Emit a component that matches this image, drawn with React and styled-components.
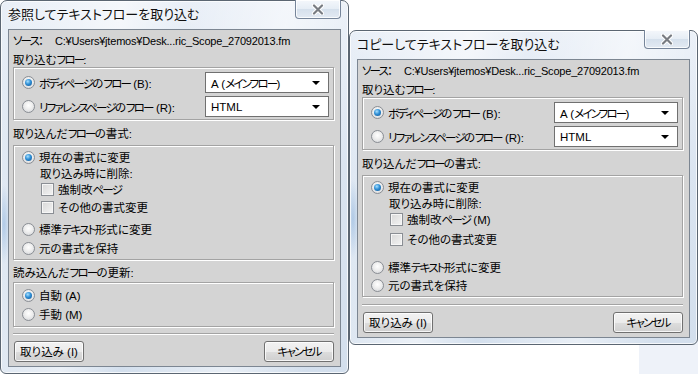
import styled, { createGlobalStyle } from "styled-components";

const GlobalStyle = createGlobalStyle`
  html, body {
    margin: 0;
    padding: 0;
    background: #ffffff;
  }
  body {
    font-family: "Liberation Sans", "Noto Sans CJK JP", sans-serif;
    font-size: 11.5px;
    color: #000;
    font-feature-settings: "palt";
  }
`;

const Desktop = styled.div`
  position: relative;
  width: 698px;
  height: 374px;
  overflow: hidden;
  background: #ffffff;
`;

const DesktopPatch = styled.div`
  position: absolute;
  left: 639px;
  top: 330px;
  width: 59px;
  height: 44px;
  background: #eef2f9;
`;

const Window = styled.div`
  position: absolute;
  left: ${(p) => p.x}px;
  top: ${(p) => p.y}px;
  width: 349px;
  box-sizing: border-box;
  border: 1px solid #5b6672;
  border-radius: 7px 7px 6px 6px;
  padding: 0 7px 6px 7px;
  display: flex;
  flex-direction: column;
  background:
    radial-gradient(ellipse 6px 40px at 3px 60%, rgba(120, 165, 215, 0.45), rgba(120, 165, 215, 0) 100%),
    linear-gradient(100deg, rgba(255,255,255,0) 0%, rgba(255,255,255,0.55) 30%, rgba(255,255,255,0) 45%, rgba(255,255,255,0.5) 70%, rgba(255,255,255,0) 90%),
    linear-gradient(180deg, #e9eff7 0%, #dbe5f1 45%, #d3dfed 100%);
  box-shadow: inset 0 0 0 1px rgba(255, 255, 255, 0.75);
`;

const TitleBar = styled.div`
  height: 28px;
  display: flex;
  align-items: flex-start;
`;

const Title = styled.div`
  line-height: 28px;
  font-size: 13px;
  color: #101010;
  text-shadow: 0 0 6px rgba(255, 255, 255, 0.9);
`;

const CloseButton = styled.div`
  margin-left: auto;
  margin-top: -1px;
  width: 46px;
  height: 19px;
  box-sizing: border-box;
  border: 1px solid #76859a;
  border-top: none;
  border-radius: 0 0 4px 4px;
  background: linear-gradient(180deg, #f4f7fb 0%, #e6edf5 50%, #d5e0ec 51%, #e3eaf3 100%);
  box-shadow: inset 0 0 0 1px rgba(255, 255, 255, 0.8);
  display: flex;
  align-items: center;
  justify-content: center;
`;

const Client = styled.div`
  background: #d4d4d4;
  border: 1px solid #7c8692;
  padding: 0 6px 4px 4px;
  display: flex;
  flex-direction: column;
`;

const TextLine = styled.div`
  line-height: 16px;
  height: 16px;
  margin-top: ${(p) => p.mt || 0}px;
  white-space: nowrap;
`;

const SourceLine = styled(TextLine)`
  display: flex;
  gap: 11px;
`;

const Path = styled.span`
  font-size: 11px;
  letter-spacing: -0.2px;
`;

const Kana = styled.span`
  letter-spacing: -1.8px;
`;

const Group = styled.div`
  margin-top: ${(p) => p.mt || 0}px;
  border: 1px solid #a3a3a3;
  box-shadow: inset 1px 1px 0 #ffffff, 1px 1px 0 #ffffff;
  padding: ${(p) => p.pt}px 4px ${(p) => p.pb}px 8px;
  display: flex;
  flex-direction: column;
`;

const Row = styled.div`
  display: flex;
  align-items: center;
  height: ${(p) => p.h || 16}px;
  margin-top: ${(p) => p.mt || 0}px;
  padding-left: ${(p) => p.indent || 0}px;
  gap: 4px;
  white-space: nowrap;
`;

const Radio = styled.span`
  width: 13px;
  height: 13px;
  box-sizing: border-box;
  border-radius: 50%;
  border: 1px solid #8a8e94;
  background: radial-gradient(circle at 50% 40%, #ffffff 0%, #eeeeee 45%, #cfd2d6 100%);
  display: flex;
  align-items: center;
  justify-content: center;
  flex: none;

  &::after {
    content: "";
    width: 7px;
    height: 7px;
    border-radius: 50%;
    display: ${(p) => (p.checked ? "block" : "none")};
    background: radial-gradient(circle at 40% 35%, #a9e1ff 0%, #2f8fd6 45%, #0f4f8c 100%);
  }
`;

const Check = styled.span`
  width: 13px;
  height: 13px;
  box-sizing: border-box;
  border: 1px solid #8a8e94;
  background: linear-gradient(135deg, #d8d8d8 0%, #f4f4f4 100%);
  box-shadow: inset 0 0 0 1px #f6f6f6;
  flex: none;
`;

const Combo = styled.div`
  margin-left: auto;
  flex: none;
  width: 124px;
  height: 21px;
  box-sizing: border-box;
  border: 1px solid #707070;
  background: #ffffff;
  display: flex;
  align-items: center;
  padding: 0 8px 0 5px;
`;

const ComboText = styled.span`
  flex: 1;
`;

const Arrow = styled.span`
  width: 0;
  height: 0;
  border-left: 4px solid transparent;
  border-right: 4px solid transparent;
  border-top: 4px solid #000;
`;

const Separator = styled.div`
  margin-top: ${(p) => p.mt}px;
  height: 1px;
  background: #a3a3a3;
  border-bottom: 1px solid #ffffff;
`;

const ButtonBar = styled.div`
  margin-top: ${(p) => p.mt}px;
  display: flex;
  justify-content: space-between;
  padding-left: 1px;
`;

const Button = styled.div`
  width: 70px;
  height: 21px;
  box-sizing: border-box;
  border: 1px solid #707070;
  border-radius: 3px;
  background: linear-gradient(180deg, #f2f2f2 0%, #ebebeb 50%, #dddddd 51%, #cfcfcf 100%);
  box-shadow: inset 0 0 0 1px rgba(255, 255, 255, 0.8);
  display: flex;
  align-items: center;
  justify-content: center;
  line-height: 16px;
`;

// Meiryo UI draws katakana narrower than Noto; tighten just those runs
const T = ({ children }) =>
  String(children)
    .split(/([\u30A0-\u30FF]+)/)
    .map((part, i) =>
      /[\u30A0-\u30FF]/.test(part) ? <Kana key={i}>{part}</Kana> : part
    );

const CloseGlyph = () => (
  <svg width="12" height="11" viewBox="0 0 12 11">
    <path d="M2 1.5 L10 9.5 M10 1.5 L2 9.5" stroke="#ffffff" strokeWidth="4.2" strokeLinecap="round" />
    <path d="M2 1.5 L10 9.5 M10 1.5 L2 9.5" stroke="#787c82" strokeWidth="2.2" strokeLinecap="round" />
  </svg>
);

const Dialog = ({ x, y, title, withUpdate, spacing, mnemonic }) => (
  <Window x={x} y={y}>
    <TitleBar>
      <Title>{title}</Title>
      <CloseButton>
        <CloseGlyph />
      </CloseButton>
    </TitleBar>
    <Client>
      <SourceLine mt={3}>
        <span><T>ソース：</T></span>
        <Path>C:¥Users¥jtemos¥Desk...ric_Scope_27092013.fm</Path>
      </SourceLine>
      <TextLine mt={3}><T>取り込むフロー:</T></TextLine>
      <Group mt={-1} pt={4} pb={2}>
        <Row h={21}>
          <Radio checked />
          <span><T>ボディページのフロー (B):</T></span>
          <Combo>
            <ComboText>A (<T>メインフロー</T>)</ComboText>
            <Arrow />
          </Combo>
        </Row>
        <Row h={21} mt={3}>
          <Radio />
          <span><T>リファレンスページのフロー (R):</T></span>
          <Combo>
            <ComboText>HTML</ComboText>
            <Arrow />
          </Combo>
        </Row>
      </Group>
      <TextLine mt={6}><T>取り込んだフローの書式:</T></TextLine>
      <Group mt={3} pt={3} pb={3}>
        <Row>
          <Radio checked />
          <span>現在の書式に変更</span>
        </Row>
        <Row indent={18}>取り込み時に削除:</Row>
        <Row indent={19}>
          <Check />
          <span><T>{mnemonic ? "強制改ページ (M)" : "強制改ページ"}</T></span>
        </Row>
        <Row indent={19} mt={spacing[0]}>
          <Check />
          <span>その他の書式変更</span>
        </Row>
        <Row mt={spacing[1]}>
          <Radio />
          <span><T>標準テキスト形式に変更</T></span>
        </Row>
        <Row mt={spacing[2]}>
          <Radio />
          <span>元の書式を保持</span>
        </Row>
      </Group>
      {withUpdate && (
        <>
          <TextLine mt={5}><T>読み込んだフローの更新:</T></TextLine>
          <Group mt={1} pt={4} pb={4}>
            <Row>
              <Radio checked />
              <span>自動 (A)</span>
            </Row>
            <Row mt={3}>
              <Radio />
              <span>手動 (M)</span>
            </Row>
          </Group>
        </>
      )}
      <Separator mt={withUpdate ? 6 : 7} />
      <ButtonBar mt={6}>
        <Button>取り込み (I)</Button>
        <Button><T>キャンセル</T></Button>
      </ButtonBar>
    </Client>
  </Window>
);

const App = () => (
  <Desktop>
    <GlobalStyle />
    <DesktopPatch />
    <Dialog
      x={0}
      y={0}
      title="参照してテキストフローを取り込む"
      withUpdate
      spacing={[2, 6, 3]}
    />
    <Dialog
      x={349}
      y={30}
      title="コピーしてテキストフローを取り込む"
      spacing={[4, 12, 2]}
      mnemonic
    />
  </Desktop>
);

export default App;
